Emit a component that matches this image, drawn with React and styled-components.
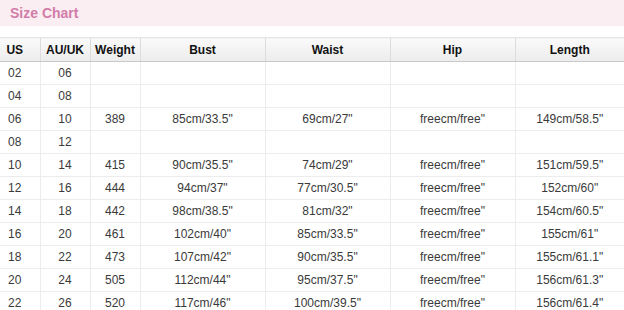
import styled, { createGlobalStyle } from "styled-components";

const GlobalStyle = createGlobalStyle`
  body {
    margin: 0;
    background: #fff;
    font-family: "Liberation Sans", Arial, sans-serif;
  }
`;

const Page = styled.main`
  width: 624px;
  height: 310px;
  overflow: hidden;
`;

const TitleBar = styled.div`
  height: 26px;
  background: #fbeef3;
  padding-left: 10px;
  display: flex;
  align-items: center;
  margin-bottom: 11px;

  h3 {
    margin: 0;
    font-size: 14px;
    font-weight: 700;
    color: #d27ca8;
  }
`;

const Table = styled.table`
  border-collapse: collapse;
  table-layout: fixed;
  width: 624px;
  font-size: 12px;
`;

const HeadCell = styled.th`
  height: 23px;
  padding: 0;
  padding-right: ${(p) => (p.$first ? "10px" : "0")};
  font-weight: 700;
  color: #111;
  text-align: center;
  background: linear-gradient(#fafafa, #ececec);
  border-left: 1px solid #dcdcdc;
  border-top: 1px solid #e6e6e6;
  border-bottom: 1px solid #c8c8c8;

  &:first-child {
    border-left: none;
  }
`;

const Cell = styled.td`
  height: 22px;
  padding: 0;
  padding-right: ${(p) => (p.$first ? "10px" : "0")};
  text-align: center;
  color: #3a3a3a;
  border-left: 1px solid #ececec;
  border-bottom: 1px solid #ececec;

  &:first-child {
    border-left: none;
  }
`;

const columns = [
  { key: "us", label: "US", width: 40 },
  { key: "au", label: "AU/UK", width: 50 },
  { key: "weight", label: "Weight", width: 50 },
  { key: "bust", label: "Bust", width: 125 },
  { key: "waist", label: "Waist", width: 125 },
  { key: "hip", label: "Hip", width: 125 },
  { key: "length", label: "Length", width: 109 },
];

const rows = [
  ["02", "06", "", "", "", "", ""],
  ["04", "08", "", "", "", "", ""],
  ["06", "10", "389", '85cm/33.5"', '69cm/27"', 'freecm/free"', '149cm/58.5"'],
  ["08", "12", "", "", "", "", ""],
  ["10", "14", "415", '90cm/35.5"', '74cm/29"', 'freecm/free"', '151cm/59.5"'],
  ["12", "16", "444", '94cm/37"', '77cm/30.5"', 'freecm/free"', '152cm/60"'],
  ["14", "18", "442", '98cm/38.5"', '81cm/32"', 'freecm/free"', '154cm/60.5"'],
  ["16", "20", "461", '102cm/40"', '85cm/33.5"', 'freecm/free"', '155cm/61"'],
  ["18", "22", "473", '107cm/42"', '90cm/35.5"', 'freecm/free"', '155cm/61.1"'],
  ["20", "24", "505", '112cm/44"', '95cm/37.5"', 'freecm/free"', '156cm/61.3"'],
  ["22", "26", "520", '117cm/46"', '100cm/39.5"', 'freecm/free"', '156cm/61.4"'],
];

const App = () => {
  return (
    <Page>
      <GlobalStyle />
      <TitleBar>
        <h3>Size Chart</h3>
      </TitleBar>

      <Table>
        <colgroup>
          {columns.map((c) => (
            <col key={c.key} style={{ width: c.width }} />
          ))}
        </colgroup>
        <thead>
          <tr>
            {columns.map((c, i) => (
              <HeadCell key={c.key} $first={i === 0}>
                {c.label}
              </HeadCell>
            ))}
          </tr>
        </thead>
        <tbody>
          {rows.map((r) => (
            <tr key={r[0]}>
              {r.map((v, i) => (
                <Cell key={i} $first={i === 0}>
                  {v}
                </Cell>
              ))}
            </tr>
          ))}
        </tbody>
      </Table>
    </Page>
  );
};

export default App;
